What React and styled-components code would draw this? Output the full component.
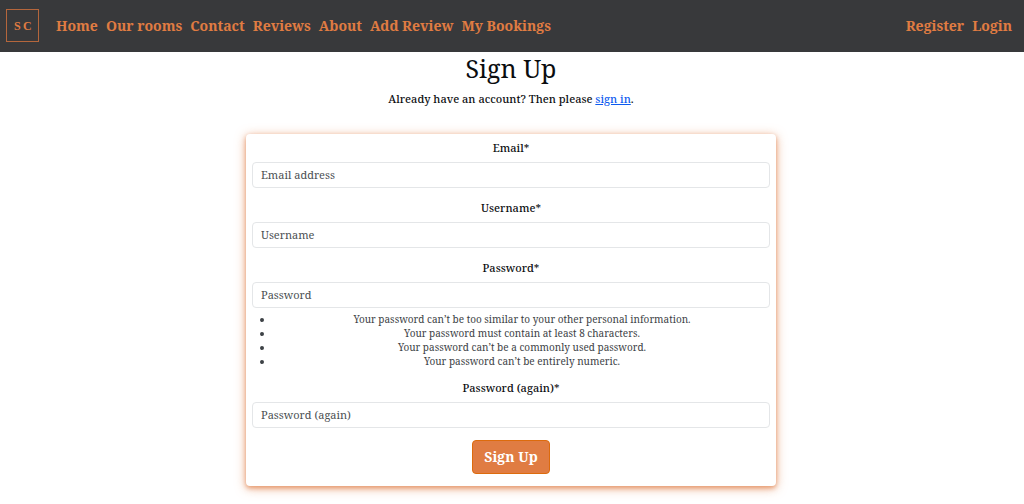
import React from "react";
import styled, { createGlobalStyle } from "styled-components";

const GlobalStyle = createGlobalStyle`
  *, *::before, *::after { box-sizing: border-box; }
  body {
    margin: 0;
    background: #fff;
    color: #0b0d0f;
    font-family: "Noto Serif", "Droid Serif", "DejaVu Serif Condensed", "DejaVu Serif", serif;
    font-size: 11px;
    line-height: 16px;
  }
`;

const Navbar = styled.nav`
  display: flex;
  align-items: center;
  gap: 17px;
  height: 52px;
  padding: 0 12px 0 5px;
  background: #38393b;
`;

const Brand = styled.a`
  display: block;
  width: 34px;
  height: 34px;
  svg { display: block; }
`;

const NavList = styled.ul`
  display: flex;
  gap: 8px;
  margin: 0;
  padding: 0;
  list-style: none;
  &:last-child { margin-left: auto; }
`;

const NavLink = styled.a`
  color: #e07c42;
  font-size: 14px;
  font-weight: 700;
  line-height: 20px;
  white-space: nowrap;
  text-decoration: none;
`;

const Main = styled.main`
  padding: 2px 2px 18px 0;
  text-align: center;
`;

const Title = styled.h1`
  margin: 0 0 9px;
  font-size: 25px;
  font-weight: 400;
  line-height: 28px;
`;

const Intro = styled.p`
  margin: 0 0 27px;
  font-weight: 500;
`;

const InlineLink = styled.a`
  color: #0d5bf0;
`;

const Form = styled.form`
  width: calc(50% + 19px);
  margin: 0 auto;
  padding: 6px 6px 12px;
  border-radius: 4px;
  background: #fff;
  box-shadow: 0 2px 4px #e07c4299, 0 2px 11px #e07c4299;
`;

const Field = styled.div`
  margin-bottom: 12px;
`;

const Label = styled.label`
  display: block;
  margin-bottom: 6px;
  font-weight: 500;
`;

const Input = styled.input`
  display: block;
  width: 100%;
  height: 26px;
  padding: 0 8px 2px;
  border: 1px solid #e4e6e8;
  border-radius: 4px;
  background: #fff;
  color: #212529;
  font: inherit;
  &::placeholder { color: #4b5053; opacity: 1; }
`;

const HelpList = styled.ul`
  margin: 4px 0 0;
  padding: 0 0 0 22px;
  color: #3d4246;
  font-size: 10px;
  line-height: 14px;
`;

const SubmitButton = styled.button`
  height: 34px;
  padding: 0 11px;
  border: 1px solid #dd6b0c;
  border-radius: 4px;
  background: #e07c42;
  color: #fff;
  font: inherit;
  font-size: 14px;
  font-weight: 700;
`;

const mainLinks = ["Home", "Our rooms", "Contact", "Reviews", "About", "Add Review", "My Bookings"];
const accountLinks = ["Register", "Login"];
const passwordRules = [
  "Your password can’t be too similar to your other personal information.",
  "Your password must contain at least 8 characters.",
  "Your password can’t be a commonly used password.",
  "Your password can’t be entirely numeric.",
];
const fields = [
  { id: "email", label: "Email*", placeholder: "Email address", type: "email" },
  { id: "username", label: "Username*", placeholder: "Username", type: "text" },
  { id: "password1", label: "Password*", placeholder: "Password", type: "password", help: passwordRules },
  { id: "password2", label: "Password (again)*", placeholder: "Password (again)", type: "password" },
];

function NavLinks({ items }) {
  return (
    <NavList>
      {items.map((item) => (
        <li key={item}><NavLink href="#">{item}</NavLink></li>
      ))}
    </NavList>
  );
}

function Logo() {
  return (
    <svg width="34" height="34" viewBox="0 0 34 34" aria-hidden="true">
      <rect x="1.5" y="0.5" width="32" height="32" fill="none" stroke="#b4663c" />
      <text x="9" y="21" fill="#e07c42" fontSize="12" fontWeight="700" fontFamily="Liberation Serif, serif">S</text>
      <text x="18" y="21" fill="#e07c42" fontSize="12" fontWeight="700" fontFamily="Liberation Serif, serif">C</text>
    </svg>
  );
}

export default function App() {
  return (
    <>
      <GlobalStyle />
      <Navbar>
        <Brand href="#" aria-label="SC"><Logo /></Brand>
        <NavLinks items={mainLinks} />
        <NavLinks items={accountLinks} />
      </Navbar>
      <Main>
        <Title>Sign Up</Title>
        <Intro>
          Already have an account? Then please <InlineLink href="#">sign in</InlineLink>.
        </Intro>
        <Form onSubmit={(event) => event.preventDefault()}>
          {fields.map(({ id, label, placeholder, type, help }) => (
            <Field key={id}>
              <Label htmlFor={id}>{label}</Label>
              <Input id={id} type={type} placeholder={placeholder} />
              {help && (
                <HelpList>
                  {help.map((rule) => <li key={rule}>{rule}</li>)}
                </HelpList>
              )}
            </Field>
          ))}
          <SubmitButton type="submit">Sign Up</SubmitButton>
        </Form>
      </Main>
    </>
  );
}
